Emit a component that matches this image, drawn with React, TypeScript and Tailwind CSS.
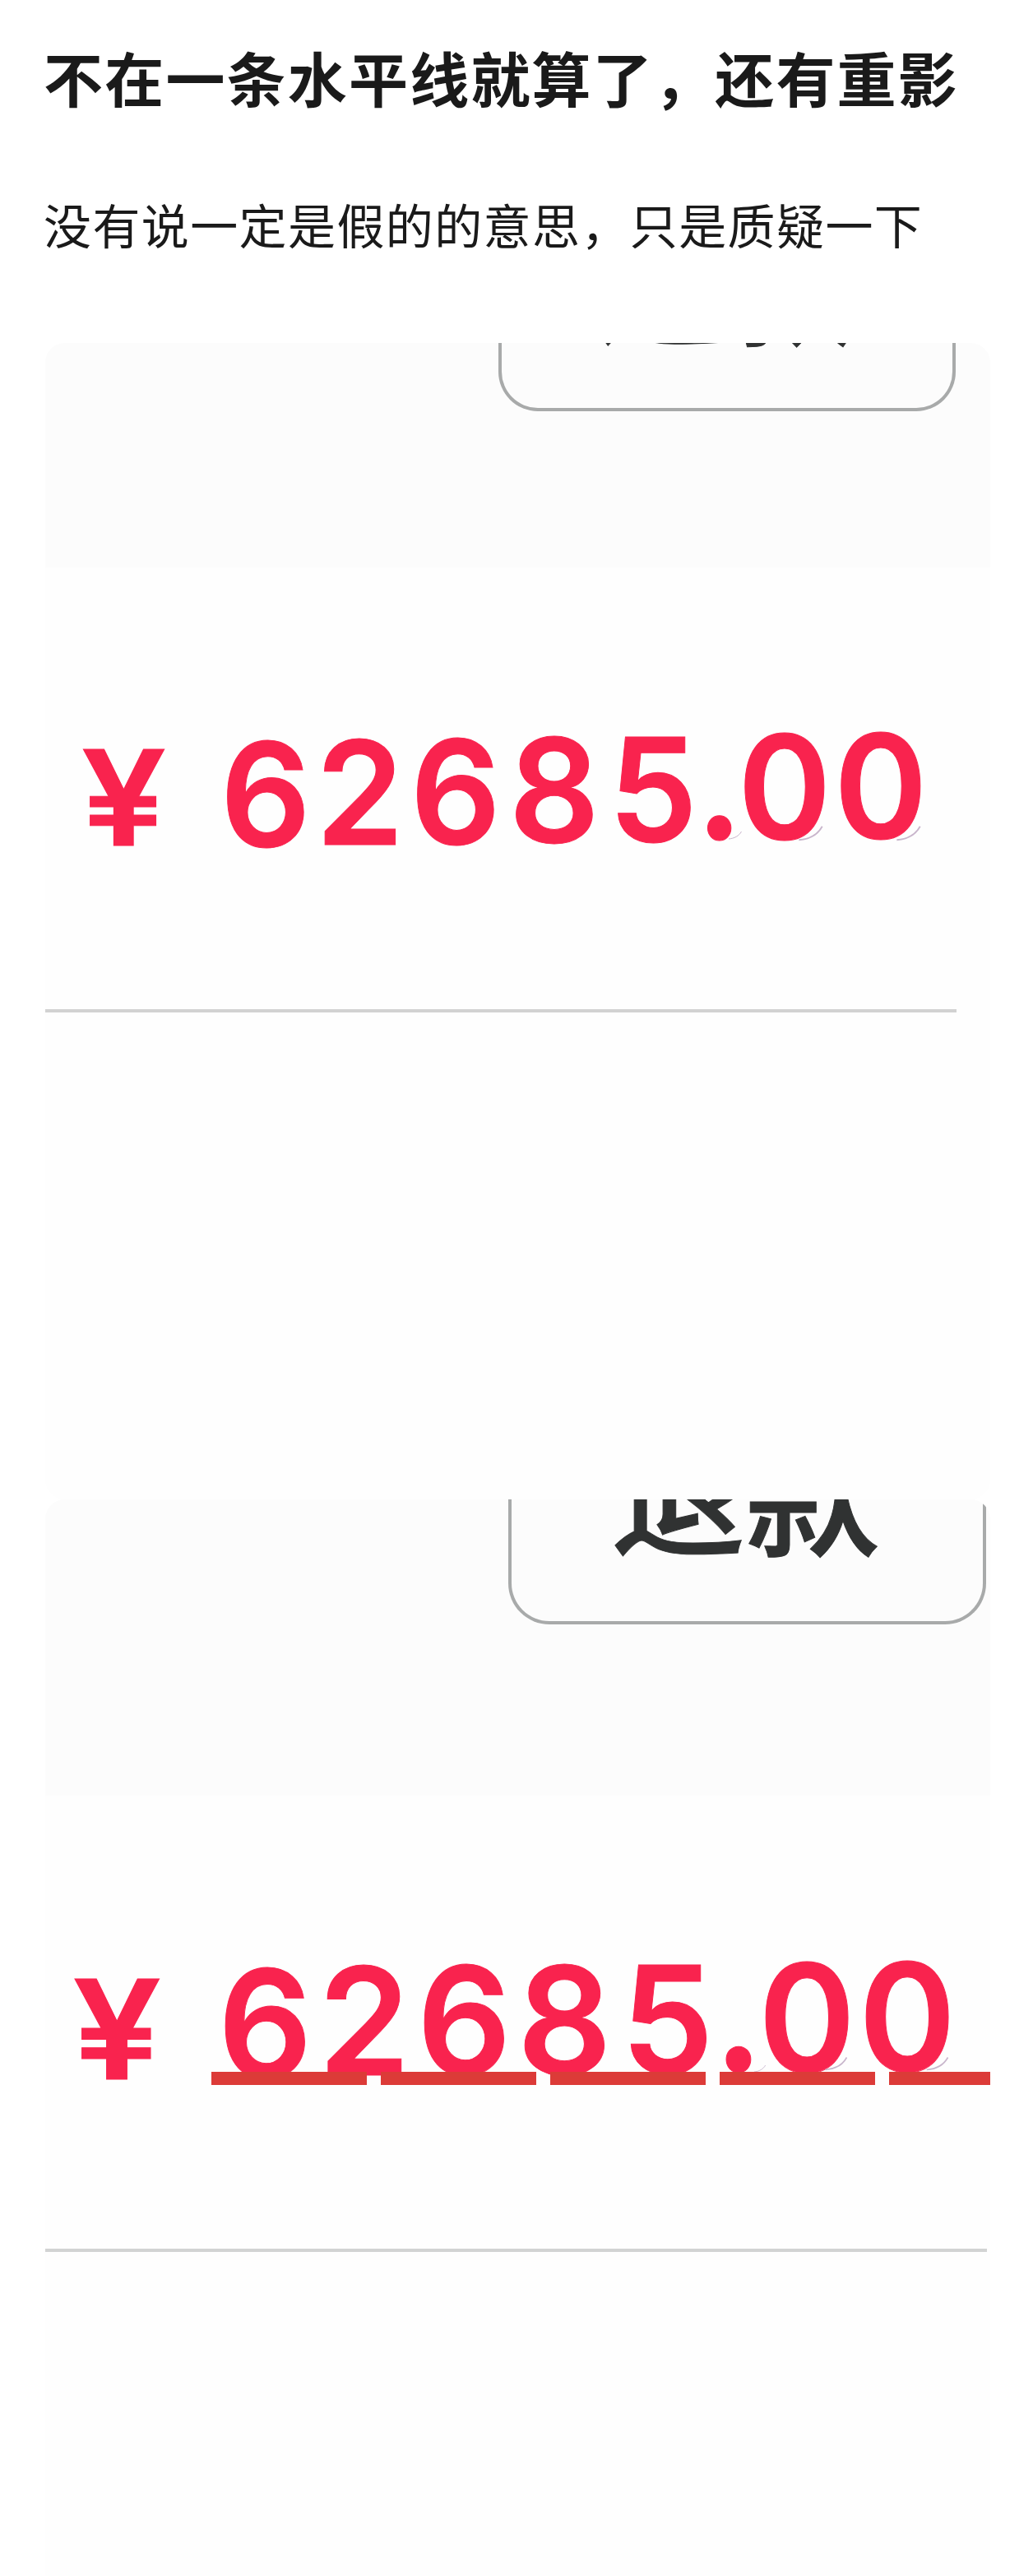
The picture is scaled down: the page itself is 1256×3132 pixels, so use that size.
type Glyph = { char: string; cell: string };

const firstAmount: Glyph[] = [
  { char: "6", cell: "w-[115px] mt-[11px]" },
  { char: "2", cell: "w-[116px] mt-[9px]" },
  { char: "6", cell: "w-[115px] mt-[8px]" },
  { char: "8", cell: "w-[127px] mt-[6px]" },
  { char: "5", cell: "w-[113px] mt-[5px]" },
  { char: ".", cell: "w-[47px] mt-[6px] text-[158px] font-['Noto_Sans_CJK_SC',sans-serif]" },
  { char: "0", cell: "w-[112px] mt-[2px]" },
  { char: "0", cell: "w-[121px] mt-[1px]" },
];

const secondAmount: Glyph[] = [
  { char: "6", cell: "w-[120px] mt-[13px]" },
  { char: "2", cell: "w-[121px] mt-[10px]" },
  { char: "6", cell: "w-[122px] mt-[9px]" },
  { char: "8", cell: "w-[122px] mt-[9px]" },
  { char: "5", cell: "w-[129px] mt-[8px]" },
  { char: ".", cell: "w-[43px] mt-[7px] text-[166px] font-['Noto_Sans_CJK_SC',sans-serif]" },
  { char: "0", cell: "w-[124px] mt-[6px]" },
  { char: "0", cell: "w-[121px] mt-[5px]" },
];

function Digits({ glyphs }: { glyphs: Glyph[] }) {
  return (
    <>
      {glyphs.map((g, i) => (
        <span key={i} className={`flex shrink-0 justify-center ${g.cell}`}>
          <span className="scale-x-[0.98]">{g.char}</span>
        </span>
      ))}
    </>
  );
}

function Ghost({ className }: { className: string }) {
  return (
    <svg className={`absolute ${className}`} viewBox="0 0 36 24" fill="none">
      <path d="M2 21C15 20 27 14 33 3" stroke="#c9b6cc" strokeWidth="2" />
    </svg>
  );
}

export default function App() {
  return (
    <main className="h-[3132px] w-[1256px] overflow-hidden bg-white pl-[55px] font-['Noto_Sans_CJK_SC',sans-serif] text-[#1a1a1a]">
      <header className="-ml-[2px] h-[417px] pt-[57px]">
        <h1 className="h-[72px] whitespace-nowrap text-[72px] leading-[72px] font-bold tracking-[2.2px]">
          不在一条水平线就算了，还有重影
        </h1>
        <p className="mt-[114px] h-[58px] whitespace-nowrap text-[58px] leading-[58px] tracking-[1.4px]">
          没有说一定是假的的意思，只是质疑一下
        </p>
      </header>

      <section className="relative h-[1406px] w-[1149px] overflow-hidden rounded-[24px] bg-[#fefefe]">
        <div className="h-[273px] bg-[#fcfcfc]">
          <div className="ml-[551px] flex h-[83px] w-[556px] items-end justify-center overflow-hidden rounded-b-[48px] border-x-[4px] border-b-[4px] border-[#a8aaaa] pb-[78px] pr-1">
            <span className="shrink-0 text-[157px] leading-[157px] font-medium text-[#303232] [-webkit-text-stroke:1px_#303232]">
              退款
            </span>
          </div>
        </div>
        <div className="mt-[177px] flex h-[190px] font-['Inter',sans-serif] text-[175px] leading-none font-semibold text-[#f9234e] [-webkit-text-stroke:1px_#f9234e]">
          <span className="mt-[22px] flex w-[210px] shrink-0 justify-center pr-[20px] text-[161px]">
            <span className="scale-x-[1.14]">¥</span>
          </span>
          <Digits glyphs={firstAmount} />
        </div>
        <Ghost className="top-[591px] left-[830px] h-[15px] w-[18px]" />
        <Ghost className="top-[585px] left-[914px] h-[22px] w-[34px]" />
        <Ghost className="top-[585px] left-[1033px] h-[22px] w-[34px]" />
        <div className="mt-[170px] h-[4px] w-[1108px] bg-[#d2d2d2]" />
      </section>

      <section className="relative h-[1309px] w-[1149px] overflow-hidden rounded-t-[24px] bg-[#fefefe]">
        <div className="h-[360px] bg-[#fcfcfc]">
          <div className="ml-[563px] flex h-[152px] w-[581px] items-end justify-center overflow-hidden rounded-b-[50px] border-x-[4px] border-b-[4px] border-[#a8aaaa] pb-[81px] pr-1">
            <span className="shrink-0 text-[164px] leading-[164px] font-medium text-[#303232] [-webkit-text-stroke:1px_#303232]">
              退款
            </span>
          </div>
        </div>
        <div className="mt-[173px] flex h-[163px] font-['Inter',sans-serif] text-[182px] leading-none font-semibold text-[#f9234e] [-webkit-text-stroke:1px_#f9234e]">
          <span className="mt-[27px] flex w-[207px] shrink-0 justify-center pr-[33px] text-[168px]">
            <span className="scale-x-[1.14]">¥</span>
          </span>
          <Digits glyphs={secondAmount} />
        </div>
        <Ghost className="top-[686px] left-[861px] h-[12px] w-[16px]" />
        <Ghost className="top-[676px] left-[945px] h-[20px] w-[34px]" />
        <Ghost className="top-[676px] left-[1068px] h-[20px] w-[34px]" />
        <div className="relative ml-[202px] flex h-[16px] gap-[17px]">
          <i className="w-[189px] shrink-0 bg-[#dc3b38]" />
          <i className="w-[189px] shrink-0 bg-[#dc3b38]" />
          <i className="w-[189px] shrink-0 bg-[#dc3b38]" />
          <i className="w-[189px] shrink-0 bg-[#dc3b38]" />
          <i className="w-[189px] shrink-0 bg-[#dc3b38]" />
        </div>
        <div className="mt-[199px] h-[4px] w-[1145px] bg-[#d2d3d3]" />
      </section>
    </main>
  );
}
